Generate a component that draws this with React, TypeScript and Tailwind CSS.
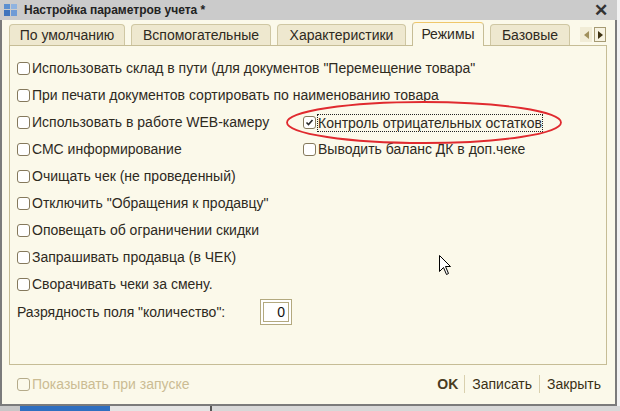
import React from "react";

// ---------------------------------------------
// Диалог "Настройка параметров учета" (1С)
// ---------------------------------------------

type Row = { left: string; right?: string; rightChecked?: boolean };

const rows: Row[] = [
  { left: 'Использовать склад в пути (для документов "Перемещение товара"' },
  { left: "При печати документов сортировать по наименованию товара" },
  { left: "Использовать в работе WEB-камеру", right: "Контроль отрицательных остатков", rightChecked: true },
  { left: "СМС информирование", right: "Выводить баланс ДК в доп.чеке" },
  { left: "Очищать чек (не проведенный)" },
  { left: 'Отключить "Обращения к продавцу"' },
  { left: "Оповещать об ограничении скидки" },
  { left: "Запрашивать продавца (в ЧЕК)" },
  { left: "Сворачивать чеки за смену." },
];

const tabs = [
  { title: "По умолчанию", w: "w-[116px]" },
  { title: "Вспомогательные", w: "w-[140px]" },
  { title: "Характеристики", w: "w-[129px]" },
  { title: "Режимы", w: "w-[72px]", active: true },
  { title: "Базовые", w: "w-[80px]" },
];

function CheckBox({ checked, disabled }: { checked?: boolean; disabled?: boolean }) {
  return (
    <span
      className={`w-[13px] h-[13px] shrink-0 rounded-[3px] border flex items-center justify-center ${
        disabled ? "border-[#b5ab8a] bg-[#fbf9ea]" : "border-[#85795c] bg-white"
      }`}
    >
      {checked && (
        <svg width="9" height="9" viewBox="0 0 9 9">
          <path d="M1.5 4.5 L3.5 6.5 L7.5 2" stroke="#2a2a2a" strokeWidth="1.6" fill="none" />
        </svg>
      )}
    </span>
  );
}

function Option({ text, checked, focused }: { text: string; checked?: boolean; focused?: boolean }) {
  return (
    <div className="flex items-center gap-[2px] whitespace-nowrap">
      <CheckBox checked={checked} />
      <span className={focused ? "outline outline-1 outline-dotted outline-[#222] leading-[16px]" : ""}>
        {text}
      </span>
    </div>
  );
}

export default function App() {
  return (
    <div
      className="relative w-[620px] h-[411px] overflow-hidden bg-[#dcdcdc] text-[14px] text-[#2e2a1e]"
      style={{ fontFamily: '"Liberation Sans", Arial, sans-serif' }}
    >
      <div className="w-[617px] h-[406px] flex flex-col">
        {/* заголовок окна */}
        <div className="h-[20px] bg-[#cbcbcb] flex items-center pl-[4px] pr-[9px] shrink-0">
          <svg width="15" height="13" viewBox="0 0 15 13" className="mr-[5px]">
            <rect x="0" y="0" width="6" height="5" fill="#5b8fd0" />
            <rect x="7" y="0" width="6" height="5" fill="#8fb3e0" />
            <rect x="0" y="6" width="6" height="6" fill="#3f74bd" />
            <rect x="7" y="6" width="6" height="6" fill="#6f9bd6" />
          </svg>
          <span className="font-bold text-[12px] text-[#222]">Настройка параметров учета *</span>
          <span className="ml-auto text-[17px] font-bold leading-none text-[#333]">✕</span>
        </div>

        {/* тело окна */}
        <div className="flex-1 flex flex-col bg-[#fbf9ea] border-x-2 border-b-2 border-[#7b7b7b] pl-[7px] pr-[8px]">
          {/* вкладки */}
          <div className="h-[24px] flex items-end gap-[6px] mt-[1px] relative">
            {tabs.map((t) =>
              t.active ? (
                <div
                  key={t.title}
                  className={`${t.w} h-[24px] -mb-[1px] bg-[#fbf9ea] border border-b-0 border-[#c6bd96] border-t-[#efc76a] rounded-t-[4px] flex items-center justify-center relative z-10`}
                >
                  {t.title}
                </div>
              ) : (
                <div
                  key={t.title}
                  className={`${t.w} h-[21px] bg-[#eee8cf] border border-b-0 border-[#cfc7a3] rounded-t-[4px] flex items-center justify-center`}
                >
                  {t.title}
                </div>
              )
            )}
            <div className="ml-auto mr-[1px] mb-[3px] flex items-center gap-[2px]">
              <span className="w-[12px] h-[15px] flex items-center justify-center bg-[#f1ecd6]">
                <svg width="5" height="8" viewBox="0 0 5 8">
                  <path d="M5 0 L0 4 L5 8 Z" fill="#a0905c" />
                </svg>
              </span>
              <span className="w-[12px] h-[15px] flex items-center justify-center border border-[#a69b74] bg-[#f7f3e2]">
                <svg width="5" height="8" viewBox="0 0 5 8">
                  <path d="M0 0 L5 4 L0 8 Z" fill="#3e3212" />
                </svg>
              </span>
            </div>
          </div>

          {/* панель вкладки */}
          <div className="h-[320px] border border-[#c6bd96] pl-[7px] pt-[9px] flex flex-col">
            {rows.map((r, i) => (
              <div key={i} className="h-[27px] flex items-center">
                {r.right ? (
                  <>
                    <div className="w-[286px] shrink-0">
                      <Option text={r.left} />
                    </div>
                    <Option text={r.right} checked={r.rightChecked} focused={r.rightChecked} />
                  </>
                ) : (
                  <Option text={r.left} />
                )}
              </div>
            ))}
            <div className="h-[26px] mt-[1px] flex items-center">
              <span className="w-[243px] shrink-0">Разрядность поля "количество":</span>
              <div className="w-[32px] h-[26px] border border-[#b3a97f] p-[2px] bg-white">
                <div className="w-full h-full border border-[#b3a97f] flex items-center justify-end pr-[3px] text-[#111]">
                  0
                </div>
              </div>
            </div>
          </div>

          {/* нижняя панель */}
          <div className="flex-1 flex items-center pl-[8px] pr-[6px] pb-[1px]">
            <div className="flex items-center gap-[2px] text-[#cbbc93]">
              <CheckBox disabled />
              <span>Показывать при запуске</span>
            </div>
            <div className="ml-auto flex items-center h-[20px] text-[#3a2f15]">
              <span className="font-bold text-[14px] text-[#4a3c1f] pr-[6px]">OK</span>
              <span className="w-px h-[18px] bg-[#d9d0ae]" />
              <span className="px-[7px]">Записать</span>
              <span className="w-px h-[18px] bg-[#d9d0ae]" />
              <span className="pl-[7px]">Закрыть</span>
            </div>
          </div>
        </div>
      </div>

      {/* полоска рабочего стола под окном */}
      <div className="absolute left-0 top-[406px] w-[620px] h-[5px] flex">
        <div className="w-[20px] bg-[#c7c7c7]" />
        <div className="w-[90px] bg-[#2f6fc0]" />
        <div className="w-[100px] bg-[#e4e4e4]" />
        <div className="w-[2px] bg-[#555]" />
        <div className="flex-1 bg-[#d8d8d8]" />
      </div>
      <div className="absolute left-[617px] top-0 w-[3px] h-[406px] bg-[#f2f2f2]" />

      {/* красная обводка */}
      <svg className="absolute left-[284px] top-[99px] pointer-events-none" width="280" height="47" viewBox="0 0 280 47">
        <ellipse cx="140" cy="23.5" rx="137" ry="20.5" fill="none" stroke="#e02a2f" strokeWidth="1.8" />
      </svg>

      {/* курсор мыши */}
      <svg className="absolute left-[439px] top-[255px] pointer-events-none" width="13" height="21" viewBox="0 0 13 21">
        <path
          d="M0.5 0.5 L0.5 16.5 L4.5 12.5 L7.5 19.5 L9.5 18.5 L6.5 11.5 L11.5 11.5 Z"
          fill="#fff"
          stroke="#000"
          strokeWidth="1"
        />
      </svg>
    </div>
  );
}
